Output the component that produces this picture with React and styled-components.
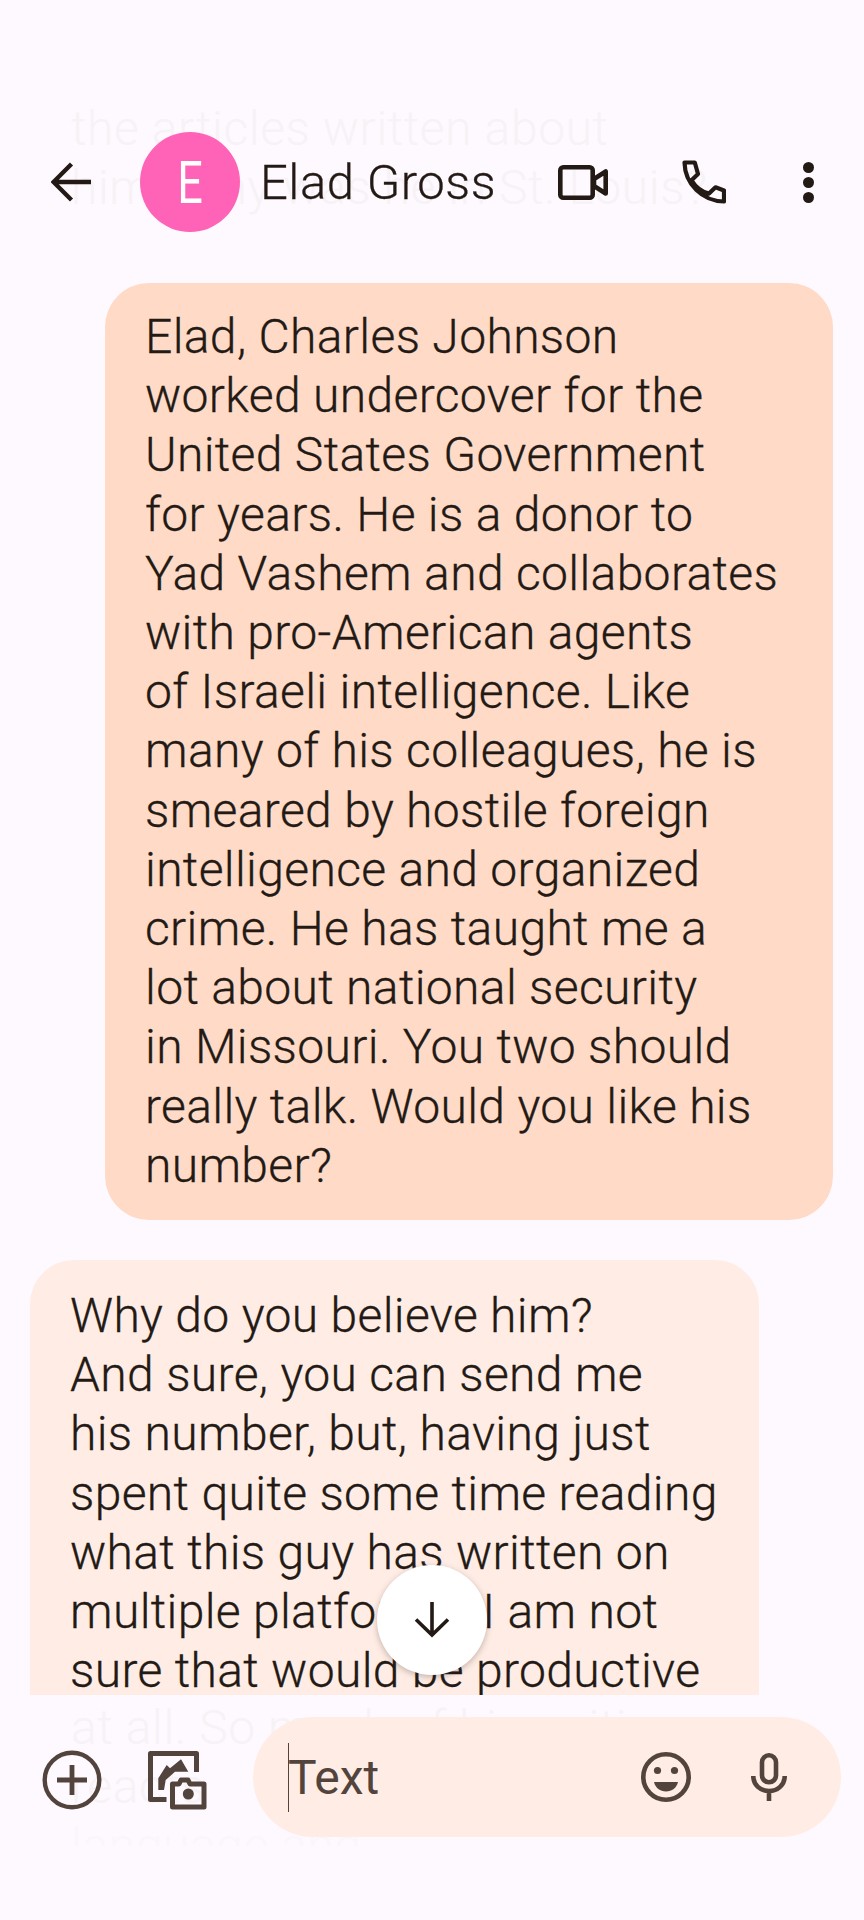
import React from "react";
import styled, { createGlobalStyle } from "styled-components";

const outgoing = [
  "Elad, Charles Johnson",
  "worked undercover for the",
  "United States Government",
  "for years. He is a donor to",
  "Yad Vashem and collaborates",
  "with pro-American agents",
  "of Israeli intelligence. Like",
  "many of his colleagues, he is",
  "smeared by hostile foreign",
  "intelligence and organized",
  "crime. He has taught me a",
  "lot about national security",
  "in Missouri. You two should",
  "really talk. Would you like his",
  "number?"
];

const incoming = [
  "Why do you believe him?",
  "And sure, you can send me",
  "his number, but, having just",
  "spent quite some time reading",
  "what this guy has written on",
  "multiple platforms, I am not",
  "sure that would be productive",
  "at all. So much of his writing"
];

const App = () => (
  <React.Fragment>
    <GlobalStyle />
    <Screen>
      <GhostTop>
        <GhostLine>the articles written about</GhostLine>
        <GhostLine>him. Why was he in St. Louis?</GhostLine>
      </GhostTop>
      <GhostBottom>
        <GhostLine>at all. So much of his writing</GhostLine>
        <GhostLine>reacts</GhostLine>
        <GhostLine $faint>language and</GhostLine>
      </GhostBottom>

      <TopBar>
        <svg width="40" height="40" viewBox="0 0 40 40" fill="none" stroke="#231a15" strokeWidth="4.4">
          <path d="M40 20H3M20.5 2 2.5 20l18 18" />
        </svg>
        <Avatar>
          <Initial>E</Initial>
        </Avatar>
        <Name>Elad Gross</Name>
        <Actions>
          <svg width="50" height="35" viewBox="0 0 50 35" fill="none" stroke="#231a15" strokeWidth="4.6" strokeLinejoin="round">
            <rect x="2.3" y="2.3" width="32.4" height="30.4" rx="3" />
            <path d="M36 14 47.7 6.5v22L36 21z" />
          </svg>
          <svg width="44" height="44" viewBox="0 0 44 44" fill="none" stroke="#231a15" strokeWidth="4.2" strokeLinejoin="round">
            <path d="M2.5 2.5h10.300l3.200 11.500-6.500 6.300c4 6.500 10 11.500 17.500 13.300l6.500-6.300 8.500 3.200v11c-22-.5-39-17.500-39.500-39z" />
          </svg>
          <Dots>
            <Dot />
            <Dot />
            <Dot />
          </Dots>
        </Actions>
      </TopBar>

      <Thread>
        <Bubble $mine>
          {outgoing.map(line => (
            <Line key={line}>{line}</Line>
          ))}
        </Bubble>
        <Bubble>
          {incoming.map(line => (
            <Line key={line}>{line}</Line>
          ))}
        </Bubble>
      </Thread>

      <ScrollDown>
        <svg width="36" height="36" viewBox="0 0 36 36" fill="none" stroke="#231a15" strokeWidth="3.6">
          <path d="M18 0v33M2 17.500 18 33l16-15.500" />
        </svg>
      </ScrollDown>

      <Composer>
        <Attachments>
          <svg width="60" height="60" viewBox="0 0 60 60" fill="none" stroke="#52443c" strokeWidth="4.4">
            <circle cx="30" cy="30" r="27.300" />
            <path d="M15 30h30M30 15v30" strokeWidth="4.800" />
          </svg>
          <svg width="60" height="60" viewBox="0 0 60 60" fill="none" stroke="#52443c" strokeWidth="5" strokeLinejoin="round">
            <path d="M18.500 49.500H2.500v-46h46V22" />
            <path fill="#52443c" stroke="none" d="M10.300 28.300 18.700 15l3.300 3.300L33 9.300l7.300 12.400H27L17.700 30 16 40h-5.700z" />
            <path d="M24.500 34h6.500l2-4h7l2 4h14v23h-31.500z" />
            <circle cx="40.300" cy="44" r="5.500" fill="#52443c" stroke="none" />
          </svg>
        </Attachments>
        <Field>
          <Caret />
          <Placeholder>Text</Placeholder>
          <FieldIcons>
            <svg width="50" height="50" viewBox="0 0 50 50" fill="none" stroke="#52443c" strokeWidth="4.600">
              <circle cx="25" cy="25" r="22.700" />
              <circle cx="16.500" cy="18.500" r="3.600" fill="#52443c" stroke="none" />
              <circle cx="33.500" cy="18.500" r="3.600" fill="#52443c" stroke="none" />
              <path d="M13 30h24c-1.500 6-6 9.500-12 9.500S14.500 36 13 30z" fill="#52443c" stroke="none" />
            </svg>
            <svg width="36" height="48" viewBox="0 0 36 48" fill="none" stroke="#52443c" strokeWidth="4.600">
              <rect x="11" y="2.300" width="14" height="27" rx="7" />
              <path d="M2.300 23c0 9 7 15 15.700 15s15.700-6 15.700-15M18 38v10" />
            </svg>
          </FieldIcons>
        </Field>
      </Composer>
    </Screen>
  </React.Fragment>
);

const GlobalStyle = createGlobalStyle`
  body {
    margin: 0;
    background: #fef9fe;
    font-family: Roboto, "Liberation Sans", sans-serif;
  }
`;

const Screen = styled.div`
  position: relative;
  display: flex;
  flex-direction: column;
  width: 864px;
  height: 1920px;
  overflow: hidden;
  background: #fef9fe;
`;

const GhostTop = styled.div`
  position: absolute;
  top: 99px;
  left: 71px;
`;

const GhostBottom = styled.div`
  position: absolute;
  top: 1698px;
  left: 71px;
  height: 148px;
  overflow: hidden;
`;

const GhostLine = styled.div`
  font-size: 48px;
  font-weight: 300;
  line-height: 59px;
  letter-spacing: 0.6px;
  color: ${props => (props.$faint ? "#fbf6fb" : "#f6f2f6")};
  white-space: nowrap;
`;

const TopBar = styled.header`
  position: relative;
  display: flex;
  align-items: center;
  height: 100px;
  margin-top: 132px;
  padding-left: 51px;
`;

const Avatar = styled.div`
  display: flex;
  align-items: center;
  justify-content: center;
  width: 100px;
  height: 100px;
  margin-left: 49px;
  border-radius: 50%;
  background: #ff63b8;
  color: #fff;
`;

const Initial = styled.span`
  font-size: 60px;
  transform: scaleX(0.75);
`;

const Name = styled.div`
  flex: 1;
  margin-left: 20px;
  font-size: 49px;
  font-weight: 300;
  letter-spacing: 0.5px;
  -webkit-text-stroke: 0.3px #231a15;
  color: #231a15;
`;

const Actions = styled.div`
  display: flex;
  align-items: center;
  gap: 74px;
  padding-right: 50px;
`;

const Dots = styled.div`
  display: flex;
  flex-direction: column;
  gap: 4px;
  margin-left: 3px;
`;

const Dot = styled.span`
  width: 11px;
  height: 11px;
  border-radius: 50%;
  background: #231a15;
`;

const Thread = styled.main`
  position: relative;
  display: flex;
  flex-direction: column;
  gap: 40px;
  height: 1412px;
  margin-top: 51px;
  overflow: hidden;
`;

const Bubble = styled.div`
  flex-shrink: 0;
  box-sizing: border-box;
  width: ${props => (props.$mine ? "728px" : "729px")};
  margin-left: ${props => (props.$mine ? "105px" : "30px")};
  padding: ${props => (props.$mine ? "24px 40px 25px" : "26px 40px 24px")};
  border-radius: 44px;
  background: ${props => (props.$mine ? "#ffdac7" : "#ffede5")};
  color: #231a15;
  font-size: 48px;
  font-weight: 300;
  letter-spacing: 0.35px;
  -webkit-text-stroke: 0.3px #231a15;
  line-height: 59.2px;
`;

const Line = styled.div`
  white-space: nowrap;
`;

const ScrollDown = styled.div`
  position: absolute;
  top: 1565px;
  left: 377px;
  display: flex;
  align-items: center;
  justify-content: center;
  width: 110px;
  height: 110px;
  border-radius: 50%;
  background: #fff;
  box-shadow: 0 2px 6px rgba(60, 40, 30, 0.3);
`;

const Composer = styled.footer`
  position: relative;
  display: flex;
  align-items: flex-start;
  gap: 45px;
  margin-top: 22px;
  padding-left: 42px;
`;

const Attachments = styled.div`
  display: flex;
  gap: 46px;
  margin-top: 33px;
`;

const Field = styled.div`
  display: flex;
  align-items: center;
  box-sizing: border-box;
  width: 588px;
  height: 120px;
  padding: 0 54px 0 35px;
  border-radius: 60px;
  background: #ffede5;
`;

const Caret = styled.span`
  width: 1px;
  height: 69px;
  background: #52443c;
`;

const Placeholder = styled.span`
  flex: 1;
  margin-left: -1px;
  font-size: 48px;
  color: #52443c;
`;

const FieldIcons = styled.div`
  display: flex;
  align-items: center;
  gap: 60px;
`;

export default App;
